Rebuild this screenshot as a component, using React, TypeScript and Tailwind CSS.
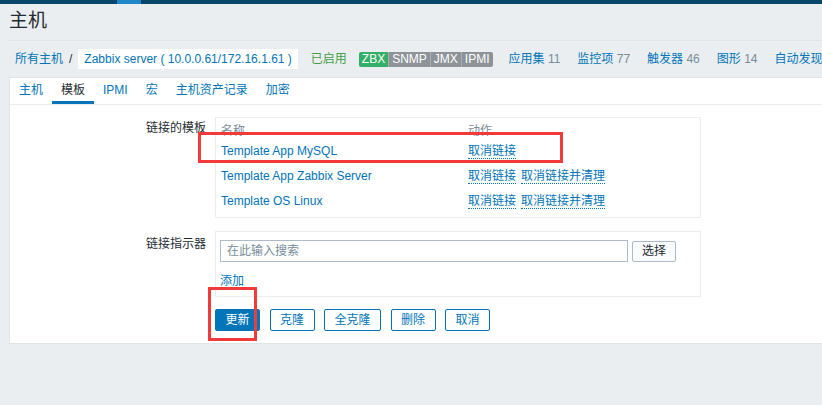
import React from 'react'

const templates = [
  { name: 'Template App MySQL', clear: false },
  { name: 'Template App Zabbix Server', clear: true },
  { name: 'Template OS Linux', clear: true },
]

const counts = [
  { label: '应用集', n: 11 },
  { label: '监控项', n: 77 },
  { label: '触发器', n: 46 },
  { label: '图形', n: 14 },
  { label: '自动发现规则', n: 2 },
  { label: 'Web监测', n: 0 },
]

const tabs = ['主机', '模板', 'IPMI', '宏', '主机资产记录', '加密']

const Link: React.FC<{ children: React.ReactNode }> = ({ children }) => (
  <span className="text-[#0275b8] border-b border-dotted border-[#0275b8] leading-[14px] inline-block">
    {children}
  </span>
)

const App: React.FC = () => {
  return (
    <div className="relative w-[822px] h-[405px] overflow-hidden bg-[#ebeef0] text-[12px] text-[#1f2c33] font-['Liberation_Sans','Noto_Sans_CJK_SC',sans-serif]">
      {/* top nav strip */}
      <div className="flex h-[4px] bg-[#0a466a]">
        <div className="w-[117px]" />
        <div className="w-[24px] bg-[#1f86c8]" />
      </div>

      <div className="pl-[9px]">
        <div className="h-[37px] pt-[5px] border-b border-[#dfe4e7]">
          <h1 className="text-[19px] leading-[24px] text-[#1f2c33]">主机</h1>
        </div>

        {/* host header */}
        <div className="h-[36px] flex items-center whitespace-nowrap pl-[6px]">
          <span className="shrink-0 text-[#0275b8]">所有主机</span>
          <span className="shrink-0 mx-[6px] text-[#1f2c33]">/</span>
          <span className="shrink-0 bg-white h-[20px] leading-[20px] px-[6px] text-[#0275b8]">
            Zabbix server ( 10.0.0.61/172.16.1.61 )
          </span>
          <span className="shrink-0 ml-[13px] text-[#429e47]">已启用</span>
          <div className="shrink-0 ml-[12px] flex h-[15px] leading-[15px] text-[12px] text-white rounded-[2px] overflow-hidden">
            <span className="bg-[#34af67] px-[3px]">ZBX</span>
            <span className="bg-[#8d9398] px-[3px] border-l border-[#a9aeb2]">SNMP</span>
            <span className="bg-[#8d9398] px-[3px] border-l border-[#a9aeb2]">JMX</span>
            <span className="bg-[#8d9398] px-[3px] border-l border-[#a9aeb2]">IPMI</span>
          </div>
          <div className="shrink-0 flex gap-[17px] ml-[16px]">
            {counts.map((c) => (
              <span key={c.label} className="shrink-0">
                <span className="text-[#0275b8]">{c.label}</span>{' '}
                <span className="text-[#768d99]">{c.n}</span>
              </span>
            ))}
          </div>
        </div>

        {/* panel */}
        <div className="bg-white border border-[#dfe4e7] border-r-0 pb-[12px]">
          <div className="flex h-[27px] border-b border-[#ebeef0]">
            {tabs.map((t, i) => (
              <div
                key={t}
                className={
                  i === 1
                    ? 'px-[9px] flex items-center border-b-[3px] border-[#0275b8] text-[#1f2c33]'
                    : 'px-[9px] flex items-center border-b-[3px] border-transparent text-[#0275b8]'
                }
              >
                {t}
              </div>
            ))}
          </div>

          <div className="grid grid-cols-[196px_486px] gap-x-[9px] gap-y-[13px] pt-[12px] leading-[14px]">
            <div className="text-right pt-[4px]">链接的模板</div>
            <div className="border border-[#ebeef0] pt-[6px] pb-[8px] px-[5px]">
              <div className="grid grid-cols-[247px_1fr] text-[#768d99]">
                <span>名称</span>
                <span>动作</span>
              </div>
              <div className="flex flex-col gap-[10px] mt-[6px]">
                {templates.map((t) => (
                  <div key={t.name} className="grid grid-cols-[247px_1fr]">
                    <span className="text-[#0275b8]">{t.name}</span>
                    <span className="flex gap-[5px]">
                      <Link>取消链接</Link>
                      {t.clear && <Link>取消链接并清理</Link>}
                    </span>
                  </div>
                ))}
              </div>
            </div>

            <div className="text-right pt-[6px]">链接指示器</div>
            <div className="border border-[#ebeef0] pt-[8px] pb-[8px] px-[4px]">
              <div className="flex items-center gap-[4px]">
                <div className="w-[408px] h-[22px] border border-[#acbbc7] px-[6px] flex items-center text-[#768d99]">
                  在此输入搜索
                </div>
                <button className="h-[21px] w-[44px] border border-[#acbbc7] rounded-[2px] bg-[#fafbfc] text-[#1f2c33]">
                  选择
                </button>
              </div>
              <div className="mt-[12px] text-[#0275b8]">添加</div>
            </div>
          </div>

          <div className="flex items-start gap-[9.5px] mt-[12px] ml-[205px]">
            <button className="h-[22px] px-[9.5px] rounded-[2px] border border-[#0275b8] bg-[#0275b8] text-white leading-[14px]">
              更新
            </button>
            {['克隆', '全克隆', '删除', '取消'].map((b) => (
              <button
                key={b}
                className="h-[22px] px-[9.5px] rounded-[2px] border border-[#0275b8] bg-white text-[#0275b8] leading-[14px]"
              >
                {b}
              </button>
            ))}
          </div>
        </div>
      </div>

      {/* annotation boxes */}
      <div className="absolute left-[198px] top-[132px] w-[365px] h-[31px] border-[3px] border-[#f23a3a]" />
      <div className="absolute left-[208px] top-[287px] w-[49px] h-[54px] border-[3px] border-[#f23a3a]" />
    </div>
  )
}

export default App
